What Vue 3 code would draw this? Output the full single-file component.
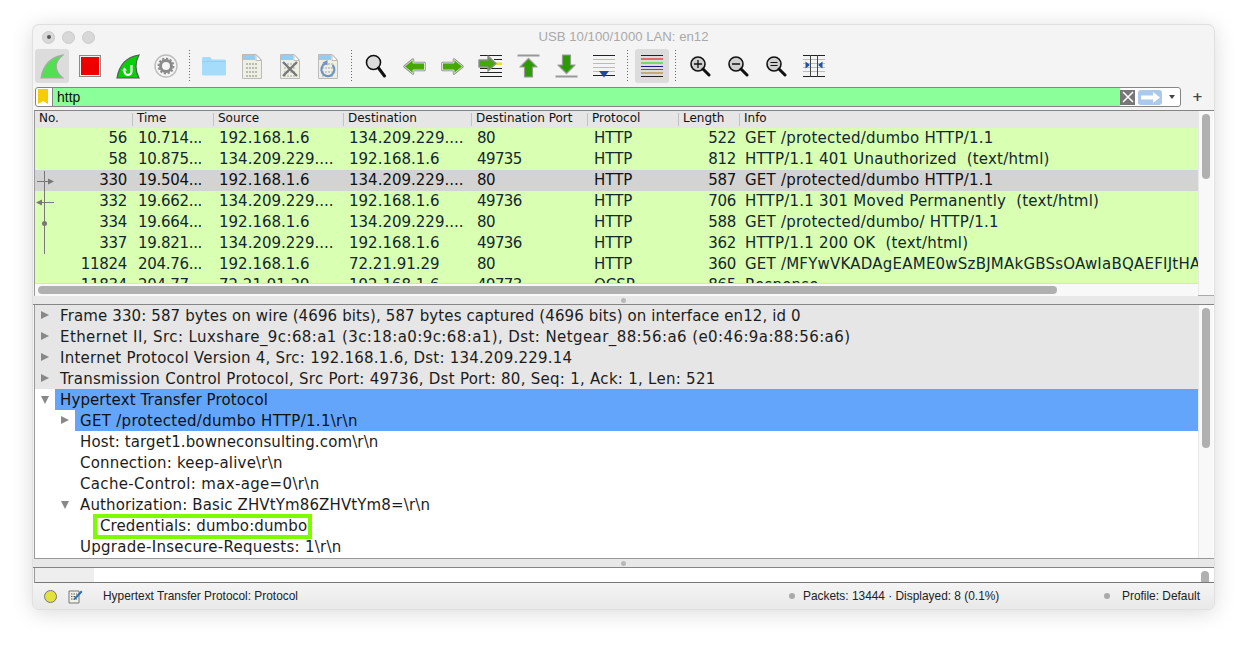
<script setup>
const cols = ['No.', 'Time', 'Source', 'Destination', 'Destination Port', 'Protocol', 'Length', 'Info']
const packets = [
  { no: '56', time: '10.714...', src: '192.168.1.6', dst: '134.209.229....', port: '80', proto: 'HTTP', len: '522', info: 'GET /protected/dumbo HTTP/1.1' },
  { no: '58', time: '10.875...', src: '134.209.229....', dst: '192.168.1.6', port: '49735', proto: 'HTTP', len: '812', info: 'HTTP/1.1 401 Unauthorized  (text/html)' },
  { no: '330', time: '19.504...', src: '192.168.1.6', dst: '134.209.229....', port: '80', proto: 'HTTP', len: '587', info: 'GET /protected/dumbo HTTP/1.1', sel: true },
  { no: '332', time: '19.662...', src: '134.209.229....', dst: '192.168.1.6', port: '49736', proto: 'HTTP', len: '706', info: 'HTTP/1.1 301 Moved Permanently  (text/html)' },
  { no: '334', time: '19.664...', src: '192.168.1.6', dst: '134.209.229....', port: '80', proto: 'HTTP', len: '588', info: 'GET /protected/dumbo/ HTTP/1.1' },
  { no: '337', time: '19.821...', src: '134.209.229....', dst: '192.168.1.6', port: '49736', proto: 'HTTP', len: '362', info: 'HTTP/1.1 200 OK  (text/html)' },
  { no: '11824', time: '204.76...', src: '192.168.1.6', dst: '72.21.91.29', port: '80', proto: 'HTTP', len: '360', info: 'GET /MFYwVKADAgEAME0wSzBJMAkGBSsOAwIaBQAEFIJtHA' },
  { no: '11834', time: '204.77...', src: '72.21.91.29', dst: '192.168.1.6', port: '49773', proto: 'OCSP', len: '865', info: 'Response' },
]
const details = [
  { t: 'Frame 330: 587 bytes on wire (4696 bits), 587 bytes captured (4696 bits) on interface en12, id 0', lv: 0, arrow: 'r', cls: 'grey', ls: 0.12 },
  { t: 'Ethernet II, Src: Luxshare_9c:68:a1 (3c:18:a0:9c:68:a1), Dst: Netgear_88:56:a6 (e0:46:9a:88:56:a6)', lv: 0, arrow: 'r', cls: 'grey', ls: 0.41 },
  { t: 'Internet Protocol Version 4, Src: 192.168.1.6, Dst: 134.209.229.14', lv: 0, arrow: 'r', cls: 'grey', ls: 0.24 },
  { t: 'Transmission Control Protocol, Src Port: 49736, Dst Port: 80, Seq: 1, Ack: 1, Len: 521', lv: 0, arrow: 'r', cls: 'grey', ls: 0.27 },
  { t: 'Hypertext Transfer Protocol', lv: 0, arrow: 'd', cls: 'blue', ls: 0.11 },
  { t: 'GET /protected/dumbo HTTP/1.1\\r\\n', lv: 1, arrow: 'r', cls: 'blue', ls: 0.3 },
  { t: 'Host: target1.bowneconsulting.com\\r\\n', lv: 1, ls: 0.13 },
  { t: 'Connection: keep-alive\\r\\n', lv: 1, ls: 0.19 },
  { t: 'Cache-Control: max-age=0\\r\\n', lv: 1, ls: 0.34 },
  { t: 'Authorization: Basic ZHVtYm86ZHVtYm8=\\r\\n', lv: 1, arrow: 'd', ls: 0.13 },
  { t: 'Credentials: dumbo:dumbo', lv: 2, mark: true, ls: 0.11 },
  { t: 'Upgrade-Insecure-Requests: 1\\r\\n', lv: 1, ls: 0.28 },
]
</script>

<template>
  <div class="page">
    <div class="window">
      <header class="titlebar">
        <div class="lights"><i class="light on"></i><i class="light"></i><i class="light"></i></div>
        <span class="title">USB 10/100/1000 LAN: en12</span>
      </header>

      <div class="toolbar">
        <button class="tool active"><svg width="24" height="25" viewBox="0 0 24 25"><path d="M1 24C3 12 10 3 23 1C14 8 14 17 23 24Z" fill="#52e052" stroke="#a9a9a9" stroke-width="1.200"/></svg></button>
        <button class="tool"><svg width="22" height="22" viewBox="0 0 22 22"><rect x=".5" y=".5" width="21" height="21" fill="#f2f2f2" stroke="#8a8a8a"/><rect x="2" y="2" width="18" height="18" fill="#ee0000"/></svg></button>
        <button class="tool"><svg width="24" height="25" viewBox="0 0 24 25"><path d="M1 24C3 12 10 3 23 1C19 8 19 17 23 24Z" fill="#08d008" stroke="#555" stroke-width="1.200"/><path d="M15.500 11v5.500a3.600 3.600 0 1 1-7 0" fill="none" stroke="#fff" stroke-width="2.200"/><path d="M6 16.500l2.500-3 2.500 3z" fill="#fff"/></svg></button>
        <button class="tool"><svg width="24" height="24" viewBox="0 0 24 24"><circle cx="12" cy="12" r="11" fill="#f5f5f5" stroke="#bdbdbd" stroke-width="1.400"/><circle cx="12" cy="12" r="5.500" fill="none" stroke="#8a8a8a" stroke-width="3"/><circle cx="12" cy="12" r="7.500" fill="none" stroke="#8a8a8a" stroke-width="1.800" stroke-dasharray="2.200 1.700"/></svg></button>
        <span class="sep"></span>
        <button class="tool"><svg width="24" height="20" viewBox="0 0 24 20"><path d="M0 2.500Q0 1 1.500 1H8l2 2.500H22.500Q24 3.500 24 5V18Q24 19.500 22.500 19.500H1.500Q0 19.500 0 18Z" fill="#a5dcfb"/><path d="M0 5.500H24" stroke="#8ecdf3" stroke-width=".8"/></svg></button>
        <button class="tool"><svg width="20" height="25" viewBox="0 0 20 25"><path d="M.5 .5H14L19.500 6V24.500H.5Z" fill="#eef0e4" stroke="#bbb"/><path d="M1 1H13V6H1Z" fill="#93cdf0"/><path d="M14 .5V6.500H19.500Z" fill="#fff" stroke="#bbb"/><g stroke="#a8a8a0" stroke-width="1.400" stroke-dasharray="2 1"><path d="M4 10H16M4 14H16M4 18H16M4 22H16"/></g></svg></button>
        <button class="tool"><svg width="20" height="25" viewBox="0 0 20 25"><path d="M.5 .5H14L19.500 6V24.500H.5Z" fill="#eef0e4" stroke="#bbb"/><path d="M1 1H13V6H1Z" fill="#93cdf0"/><path d="M14 .5V6.500H19.500Z" fill="#fff" stroke="#bbb"/><g stroke="#bdbdb5" stroke-width="1.400" stroke-dasharray="2 1"><path d="M4 10H16M4 14H16M4 18H16M4 22H16"/></g><path d="M3 8L17 22M17 8L3 22" stroke="#777" stroke-width="2.400"/></svg></button>
        <button class="tool"><svg width="20" height="25" viewBox="0 0 20 25"><path d="M.5 .5H14L19.500 6V24.500H.5Z" fill="#eef0e4" stroke="#bbb"/><path d="M1 1H13V6H1Z" fill="#93cdf0"/><path d="M14 .5V6.500H19.500Z" fill="#fff" stroke="#bbb"/><g stroke="#bdbdb5" stroke-width="1.400" stroke-dasharray="2 1"><path d="M4 10H16M4 14H16M4 18H16M4 22H16"/></g><path d="M7.500 9.500A6.500 6.500 0 1 0 14.500 11" fill="none" stroke="#6f93c4" stroke-width="2.200"/><path d="M4.500 8.500l5-2.500v5.500z" fill="#6f93c4"/></svg></button>
        <span class="sep"></span>
        <button class="tool"><svg width="22" height="24" viewBox="0 0 22 24"><circle cx="8.500" cy="8.500" r="7" fill="#dcdcdc" stroke="#111" stroke-width="1.600"/><path d="M13.500 14L19.500 22" stroke="#111" stroke-width="3" stroke-linecap="round"/></svg></button>
        <button class="tool"><svg width="23" height="17" viewBox="0 0 23 17"><path d="M1.500 8.500L10 1.500V5H21.500V12H10V15.500Z" fill="#46a800" stroke="#8c8c8c" stroke-width="2.400" stroke-linejoin="round"/><path d="M1.500 8.500L10 1.500V5H21.500V12H10V15.500Z" fill="#46a800" stroke="#f4f4f4" stroke-width=".8" stroke-linejoin="round"/></svg></button>
        <button class="tool"><svg width="23" height="17" viewBox="0 0 23 17"><path d="M21.500 8.500L13 1.500V5H1.500V12H13V15.500Z" fill="#46a800" stroke="#8c8c8c" stroke-width="2.400" stroke-linejoin="round"/><path d="M21.500 8.500L13 1.500V5H1.500V12H13V15.500Z" fill="#46a800" stroke="#f4f4f4" stroke-width=".8" stroke-linejoin="round"/></svg></button>
        <button class="tool"><svg width="24" height="24" viewBox="0 0 24 24"><path d="M2 1.500H24M2 22.500H24M2 18.500H24M2 14.500H24M16 5.500H24" stroke="#222" stroke-width="1"/><path d="M16 8.500H24V11H16Z" fill="#f0dc30"/><path d="M1 6H10V2L18 9.500L10 17V13H1Z" fill="#46a800" stroke="#8c8c8c" stroke-width="1.400" stroke-linejoin="round"/></svg></button>
        <button class="tool"><svg width="23" height="24" viewBox="0 0 23 24"><path d="M.5 1.500H22.500" stroke="#999" stroke-width="2"/><path d="M11.500 4.500L20 13H15.500V23H7.500V13H3Z" fill="#2b9c00" stroke="#999" stroke-width="1.200" stroke-linejoin="round"/></svg></button>
        <button class="tool"><svg width="23" height="24" viewBox="0 0 23 24"><path d="M.5 22.500H22.500" stroke="#999" stroke-width="2"/><path d="M11.500 19.500L20 11H15.500V1H7.500V11H3Z" fill="#2b9c00" stroke="#999" stroke-width="1.200" stroke-linejoin="round"/></svg></button>
        <button class="tool"><svg width="22" height="23" viewBox="0 0 22 23"><path d="M0 .5H22" stroke="#222"/><path d="M0 4.500H22M0 8.500H22M0 12.500H22M0 16.500H22" stroke="#bcbcb0"/><path d="M0 20.500H22" stroke="#222"/><path d="M6 16H16L11 22.500Z" fill="#21479b"/></svg></button>
        <span class="sep"></span>
        <button class="tool active"><svg width="22" height="23" viewBox="0 0 22 23"><path d="M0 .5H22M0 21.500H22" stroke="#222"/><path d="M0 4H22" stroke="#e00000"/><path d="M0 8H22" stroke="#22cc00" stroke-width="1.200"/><path d="M0 11.500H22" stroke="#1a1a8a"/><path d="M0 14.500H22" stroke="#3366bb"/><path d="M0 18H22" stroke="#b07a10"/></svg></button>
        <span class="sep"></span>
        <button class="tool"><svg width="22" height="22" viewBox="0 0 22 22"><circle cx="9" cy="9" r="7" fill="#d0d0d0" stroke="#111" stroke-width="1.600"/><path d="M14 14L20 20" stroke="#111" stroke-width="3" stroke-linecap="round"/><path d="M5 9H13M9 5V13" stroke="#111" stroke-width="1.300"/></svg></button>
        <button class="tool"><svg width="22" height="22" viewBox="0 0 22 22"><circle cx="9" cy="9" r="7" fill="#d0d0d0" stroke="#111" stroke-width="1.600"/><path d="M14 14L20 20" stroke="#111" stroke-width="3" stroke-linecap="round"/><path d="M5 9H13" stroke="#111" stroke-width="1.300"/></svg></button>
        <button class="tool"><svg width="22" height="22" viewBox="0 0 22 22"><circle cx="9" cy="9" r="7" fill="#d0d0d0" stroke="#111" stroke-width="1.600"/><path d="M14 14L20 20" stroke="#111" stroke-width="3" stroke-linecap="round"/><path d="M5.500 7.500H12.500M5.500 10.500H12.500" stroke="#111" stroke-width="1.200"/></svg></button>
        <button class="tool"><svg width="22" height="22" viewBox="0 0 22 22"><path d="M0 .5H22M0 21.500H22" stroke="#222"/><path d="M0 4.500H22M0 8.500H22M0 12.500H22M0 16.500H22" stroke="#bbb"/><path d="M7.500 0V22M14.500 0V22" stroke="#444"/><path d="M2.500 6.500L7 10L2.500 13.500Z" fill="#2050a8"/><path d="M19.500 6.500L15 10L19.500 13.500Z" fill="#2050a8"/></svg></button>
      </div>

      <div class="filter-row">
        <div class="filter">
          <span class="bookmark"><svg width="10" height="15" viewBox="0 0 10 15"><path d="M0 0H10V15L5 12L0 15Z" fill="#f4ce00"/></svg></span>
          <span class="filter-text">http</span>
          <span class="clear"><svg width="14" height="14" viewBox="0 0 14 14"><path d="M2 2L12 12M12 2L2 12" stroke="#fff" stroke-width="1.500"/></svg></span>
          <span class="apply"><svg width="19" height="11" viewBox="0 0 19 11"><path d="M0 3.500H12V0L19 5.500L12 11V7.500H0Z" fill="#fff"/></svg></span>
          <span class="caret"></span>
        </div>
        <span class="plus">+</span>
      </div>

      <section class="pane packets">
        <div class="main">
          <div class="grid head">
            <span v-for="c in cols" :key="c" class="hcell">{{ c }}</span>
          </div>
          <div class="rows">
            <div v-for="p in packets" :key="p.no" class="grid row" :class="{ sel: p.sel }">
              <span class="num tight">{{ p.no }}</span>
              <span class="tight">{{ p.time }}</span>
              <span>{{ p.src }}</span>
              <span>{{ p.dst }}</span>
              <span class="port">{{ p.port }}</span>
              <span class="proto">{{ p.proto }}</span>
              <span class="num len tight">{{ p.len }}</span>
              <span class="info">{{ p.info }}</span>
            </div>
            <svg class="rel" width="22" height="84" viewBox="0 0 22 84">
              <path d="M9.500 0V83" stroke="#777" fill="none"/>
              <path d="M2 10.500H14M7 31.500H19" stroke="#777" fill="none"/>
              <path d="M13 7.500L19 10.500L13 13.500Z" fill="#777"/>
              <path d="M1 31.500L7 28.500V34.500Z" fill="#777"/>
              <circle cx="9.500" cy="52.500" r="2.500" fill="#777"/>
            </svg>
          </div>
          <div class="hbar"><i class="hthumb"></i></div>
        </div>
        <div class="vbar"><i class="vthumb t1"></i></div>
      </section>

      <div class="splitter"><i></i></div>

      <section class="pane details">
        <div class="tree">
          <div v-for="d in details" :key="d.t" class="node" :class="[d.cls, 'lv' + d.lv]">
            <span class="arrow" :class="d.arrow"></span>
            <span class="label" :class="{ mark: d.mark }" :style="{ letterSpacing: d.ls + 'px' }">{{ d.t }}</span>
          </div>
        </div>
        <div class="vbar"><i class="vthumb t2"></i></div>
      </section>

      <div class="splitter"><i></i></div>

      <section class="pane bytes">
        <div class="offset"></div>
        <div class="hex"></div>
        <div class="vbar"><i class="vthumb t3"></i></div>
      </section>

      <footer class="status">
        <i class="led"></i>
        <svg class="edit" width="15" height="15" viewBox="0 0 15 15"><path d="M1 2H11V14H1Z" fill="#f2f2e6" stroke="#777"/><path d="M3 5H9M3 7.500H9M3 10H9" stroke="#555" stroke-dasharray="1.500 1"/><path d="M6 9L13 1.500L14.500 3L7.500 10.500L5.500 11Z" fill="#2a6fb5"/></svg>
        <span class="s-text s1">Hypertext Transfer Protocol: Protocol</span>
        <i class="dot"></i>
        <span class="s-text s2">Packets: 13444 · Displayed: 8 (0.1%)</span>
        <i class="dot d2"></i>
        <span class="s-text">Profile: Default</span>
      </footer>
    </div>
  </div>
</template>

<style>
html, body { margin: 0; background: #fff; }
</style>

<style scoped>
.page {
  width: 1248px;
  height: 651px;
  padding: 25px 0 0 33px;
  box-sizing: border-box;
  overflow: hidden;
  background: #fff;
  font-family: "DejaVu Sans", sans-serif;
}
.window {
  width: 1181px;
  height: 584px;
  display: flex;
  flex-direction: column;
  background: #f4f4f4;
  border-radius: 6px;
  box-shadow: 0 0 0 1px #e0e0e0, 0 3px 22px rgba(0, 0, 0, .16);
  overflow: hidden;
}
.titlebar {
  height: 23px;
  flex: none;
  display: flex;
  align-items: center;
  justify-content: center;
  position: relative;
}
.lights {
  position: absolute;
  left: 9px;
  top: 5.500px;
  display: flex;
  gap: 7px;
}
.light {
  width: 13px;
  height: 13px;
  box-sizing: border-box;
  border-radius: 50%;
  background: #d8d8d8;
  border: 1px solid #cacaca;
  position: relative;
}
.light.on::after {
  content: "";
  position: absolute;
  left: 3.500px;
  top: 3.500px;
  width: 4px;
  height: 4px;
  border-radius: 50%;
  background: #555;
}
.title {
  font-family: "Liberation Sans", sans-serif;
  font-size: 13.200px;
  color: #a9a9a9;
}
.toolbar {
  height: 36px;
  flex: none;
  display: flex;
  align-items: center;
}
.tool {
  width: 38px;
  height: 34px;
  flex: none;
  padding: 0;
  border: 0;
  background: none;
  display: flex;
  align-items: center;
  justify-content: center;
  position: relative;
}
.tool.active::before {
  content: "";
  position: absolute;
  inset: 0 2px;
  background: #dcdcdc;
  border-radius: 3px;
}
.tool svg { position: relative; }
.sep {
  width: 10px;
  height: 32px;
  flex: none;
  background-image: repeating-linear-gradient(#666 0 1px, transparent 1px 3px);
  background-size: 1px 100%;
  background-repeat: no-repeat;
  background-position: 4px 0;
}
.filter-row {
  height: 20px;
  margin-top: 3px;
  flex: none;
  display: flex;
  align-items: center;
  padding-left: 2px;
}
.filter {
  width: 1146px;
  height: 20px;
  box-sizing: border-box;
  border: 1px solid #858585;
  border-radius: 3px;
  background: #fff;
  display: flex;
  align-items: center;
  overflow: hidden;
}
.bookmark {
  width: 17px;
  height: 18px;
  box-sizing: border-box;
  border-right: 1px solid #858585;
  display: flex;
  justify-content: center;
  padding-top: 1px;
  padding-right: 2px;
}
.filter-text {
  width: 1067px;
  height: 18px;
  line-height: 18px;
  padding-left: 4px;
  box-sizing: border-box;
  background: #8aff9a;
  font-family: "Liberation Sans", sans-serif;
  font-size: 14px;
  color: #111;
}
.clear {
  width: 15px;
  height: 15px;
  background: #777;
  display: flex;
  align-items: center;
  justify-content: center;
  flex: none;
}
.apply {
  width: 24px;
  height: 15px;
  margin-left: 3px;
  border-radius: 3px;
  background: #abc9ea;
  display: flex;
  align-items: center;
  justify-content: center;
  flex: none;
}
.caret {
  width: 0;
  height: 0;
  margin-left: 7px;
  border-left: 3.500px solid transparent;
  border-right: 3.500px solid transparent;
  border-top: 4px solid #444;
}
.plus {
  margin-left: 11px;
  font-size: 13px;
  font-weight: 700;
  color: #444;
  line-height: 18px;
}
.pane {
  flex: none;
  display: flex;
  box-sizing: border-box;
  margin-left: 1px;
  background: #fff;
  border-left: 1px solid #999;
  width: 1180px;
}
.packets {
  height: 186px;
  margin-top: 3px;
  border-top: 1px solid #858585;
  border-bottom: 1px solid #aaa;
}
.main {
  width: 1163px;
  flex: none;
  display: flex;
  flex-direction: column;
}
.grid {
  display: grid;
  grid-template-columns: 98px 81px 130px 128px 116px 91px 61px 1fr;
}
.head {
  height: 17px;
  background: #e6e6e6;
  flex: none;
  font-size: 12px;
  color: #111;
}
.hcell {
  padding-left: 4px;
  border-right: 1px solid #c2c2c2;
  height: 13px;
  line-height: 11px;
  margin-top: 2px;
  white-space: nowrap;
}
.hcell:last-child { border: 0; }
.rows {
  height: 155px;
  flex: none;
  overflow: hidden;
  position: relative;
  background: #fff;
}
.row {
  height: 21px;
  line-height: 20px;
  background: #d9ffb3;
  color: #12272e;
  font-size: 15px;
  white-space: pre;
}
.row.sel { background: #d3d3d3; color: #111; }
.row span {
  padding-left: 5px;
  overflow: hidden;
}
.row .tight { letter-spacing: -.3px; }
.row .port { letter-spacing: -.6px; }
.row .num {
  text-align: right;
  padding-right: 6px;
  padding-left: 0;
}
.row .len { padding-right: 4px; }
.row .proto { padding-left: 6px; }
.row .info { letter-spacing: .22px; }
.rel {
  position: absolute;
  left: 0;
  top: 43px;
}
.hbar {
  height: 13px;
  flex: none;
  background: #f8f8f8;
  border-top: 1px solid #ddd;
  display: flex;
  align-items: center;
  padding-left: 3px;
  box-sizing: border-box;
}
.hthumb {
  width: 1019px;
  height: 8px;
  border-radius: 4px;
  background: #b0b0b0;
}
.vbar {
  width: 15px;
  flex: none;
  background: #f8f8f8;
  border-left: 1px solid #e8e8e8;
  box-sizing: border-box;
  padding: 3px 0 0 3px;
}
.vthumb {
  display: block;
  width: 8px;
  border-radius: 4px;
  background: #b0b0b0;
}
.t1 { height: 65px; }
.t2 { height: 140px; }
.t3 { height: 14px; border-radius: 4px 4px 0 0; }
.splitter {
  height: 8px;
  flex: none;
  background: #e8e8e8;
  border-bottom: 1px solid #858585;
  display: flex;
  align-items: center;
  justify-content: center;
}
.splitter i {
  width: 5px;
  height: 5px;
  border-radius: 50%;
  background: #b8b8b8;
}
.details {
  height: 254px;
  border-bottom: 1px solid #999;
  overflow: hidden;
}
.tree {
  width: 1163px;
  flex: none;
}
.node {
  height: 21px;
  line-height: 20px;
  font-size: 15px;
  color: #1c1c1c;
  display: flex;
  align-items: center;
  white-space: nowrap;
  position: relative;
}
.node.grey { background: #e6e6e6; }
.node.blue { background: linear-gradient(#62a5fb, #62a5fb) no-repeat; color: #111; }
.node.lv0.blue { background-position: 20px 0; }
.node.lv1.blue { background-position: 40px 0; }
.node .arrow {
  width: 0;
  height: 0;
  flex: none;
  position: absolute;
  top: 6px;
}
.lv0 .arrow { left: 6px; }
.lv1 .arrow { left: 26px; }
.arrow.r {
  border-top: 4.500px solid transparent;
  border-bottom: 4.500px solid transparent;
  border-left: 8px solid #888;
}
.arrow.d {
  top: 7px !important;
  border-left: 4.500px solid transparent;
  border-right: 4.500px solid transparent;
  border-top: 8px solid #888;
}
.lv0 .label { padding-left: 25px; }
.lv1 .label { padding-left: 45px; }
.lv2 .label { padding-left: 65px; }
.label.mark { position: relative; }
.label.mark::after {
  content: "";
  position: absolute;
  left: 58px;
  right: -5px;
  top: -2px;
  bottom: -3px;
  border: 4px solid #7dfc00;
  pointer-events: none;
}
.bytes {
  height: 15px;
  border-bottom: 1px solid #777;
  overflow: hidden;
}
.offset { width: 59px; flex: none; background: #eeeeee; }
.hex { width: 1104px; flex: none; background: #fff; }
.bytes .vbar { background: #fff; border: 0; }
.status {
  flex: 1;
  display: flex;
  align-items: center;
  background: linear-gradient(#f4f4f4, #e9e9e9);
  font-family: "Liberation Sans", sans-serif;
  color: #222;
  padding-left: 11px;
}
.s-text { font-size: 11.900px; white-space: nowrap; }
.led {
  width: 13px;
  height: 13px;
  box-sizing: border-box;
  border-radius: 50%;
  background: #e3e23a;
  border: 1px solid #777;
}
.edit { margin-left: 11px; }
.s1 { margin-left: 20px; width: 686px; }
.s2 { width: 301px; }
.dot {
  width: 6px;
  height: 6px;
  border-radius: 50%;
  background: #aaa;
  margin-right: 8px;
}
.dot.d2 { margin-right: 12px; }
</style>
